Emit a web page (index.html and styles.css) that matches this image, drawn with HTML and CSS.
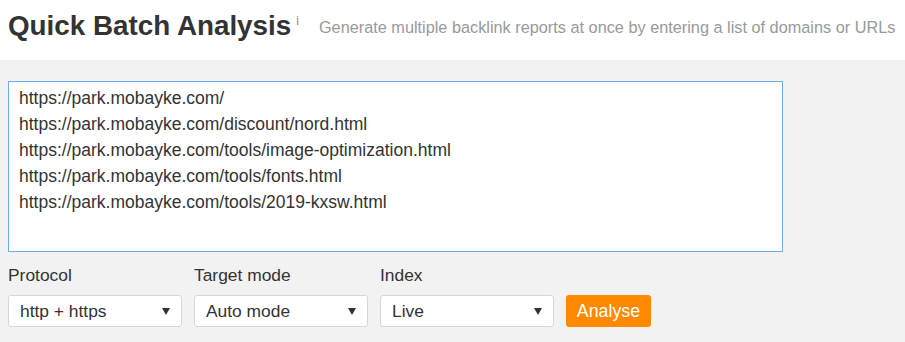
FILE: index.html
```html
<!DOCTYPE html>
<html lang="en">
<head>
  <meta charset="UTF-8" />
  <meta name="viewport" content="width=device-width, initial-scale=1.0" />
  <title>Quick Batch Analysis</title>
  <link rel="stylesheet" href="styles.css">
</head>
<body>
  <div class="header">
    <h1>Quick Batch Analysis<sup class="info">i</sup></h1>
    <span class="subtitle">Generate multiple backlink reports at once by entering a list of domains or URLs</span>
  </div>

  <div class="content">
    <textarea id="targets" spellcheck="false">https://park.mobayke.com/
https://park.mobayke.com/discount/nord.html
https://park.mobayke.com/tools/image-optimization.html
https://park.mobayke.com/tools/fonts.html
https://park.mobayke.com/tools/2019-kxsw.html</textarea>

    <div class="options">
      <div class="field">
        <label for="protocol">Protocol</label>
        <div class="select-wrap">
          <select id="protocol">
            <option>http + https</option>
            <option>http</option>
            <option>https</option>
          </select>
        </div>
      </div>
      <div class="field">
        <label for="mode">Target mode</label>
        <div class="select-wrap">
          <select id="mode">
            <option>Auto mode</option>
            <option>Exact URL</option>
            <option>Domain</option>
          </select>
        </div>
      </div>
      <div class="field">
        <label for="index">Index</label>
        <div class="select-wrap">
          <select id="index">
            <option>Live</option>
            <option>Recent</option>
            <option>Historical</option>
          </select>
        </div>
      </div>
      <button class="analyse">Analyse</button>
    </div>
  </div>
</body>
</html>
```

FILE: styles.css
```css
body { margin: 0; font-family: "Liberation Sans", Arial, sans-serif; background-color: #f2f2f2; color: #333; }
.header { background-color: #fff; height: 60px; padding: 0 8px; display: flex; align-items: flex-start; white-space: nowrap; overflow: hidden; }
.header h1 { flex-shrink: 0; margin: 10px 0 0 0; font-size: 27.8px; line-height: 32px; font-weight: bold; color: #333; }
.info { font-size: 12px; font-weight: normal; color: #888; vertical-align: top; position: relative; top: -5px; margin-left: 5px; }
.subtitle { flex-shrink: 0; font-size: 16.3px; color: #999; margin: 18px 0 0 20px; }
.content { padding: 21px 8px 0 8px; }
#targets { display: block; box-sizing: border-box; width: 775px; height: 171px; margin: 0; padding: 3px 10px; border: 1px solid #6aaeea; outline: none; resize: none; font-family: "Liberation Sans", Arial, sans-serif; font-size: 17.5px; line-height: 26px; color: #333; background: #fff; }
.options { display: flex; gap: 12px; margin-top: 13px; align-items: flex-end; }
.field label { display: block; font-size: 17.4px; line-height: 20px; margin-bottom: 10px; color: #333; }
.select-wrap { position: relative; width: 174px; }
.select-wrap::after { content: ""; position: absolute; right: 12px; top: 13px; border-left: 4px solid transparent; border-right: 4px solid transparent; border-top: 7px solid #333; pointer-events: none; }
.select-wrap select { -webkit-appearance: none; appearance: none; box-sizing: border-box; width: 100%; height: 32px; padding: 0 11px; border: 1px solid #d6d6d6; border-radius: 3px; background: #fff; font-family: "Liberation Sans", Arial, sans-serif; font-size: 17.4px; color: #333; outline: none; }
.analyse { width: 85px; height: 32px; padding: 0; border: none; border-radius: 3px; background-color: #ff8a00; color: #fff; font-family: "Liberation Sans", Arial, sans-serif; font-size: 17.8px; cursor: pointer; }
```
